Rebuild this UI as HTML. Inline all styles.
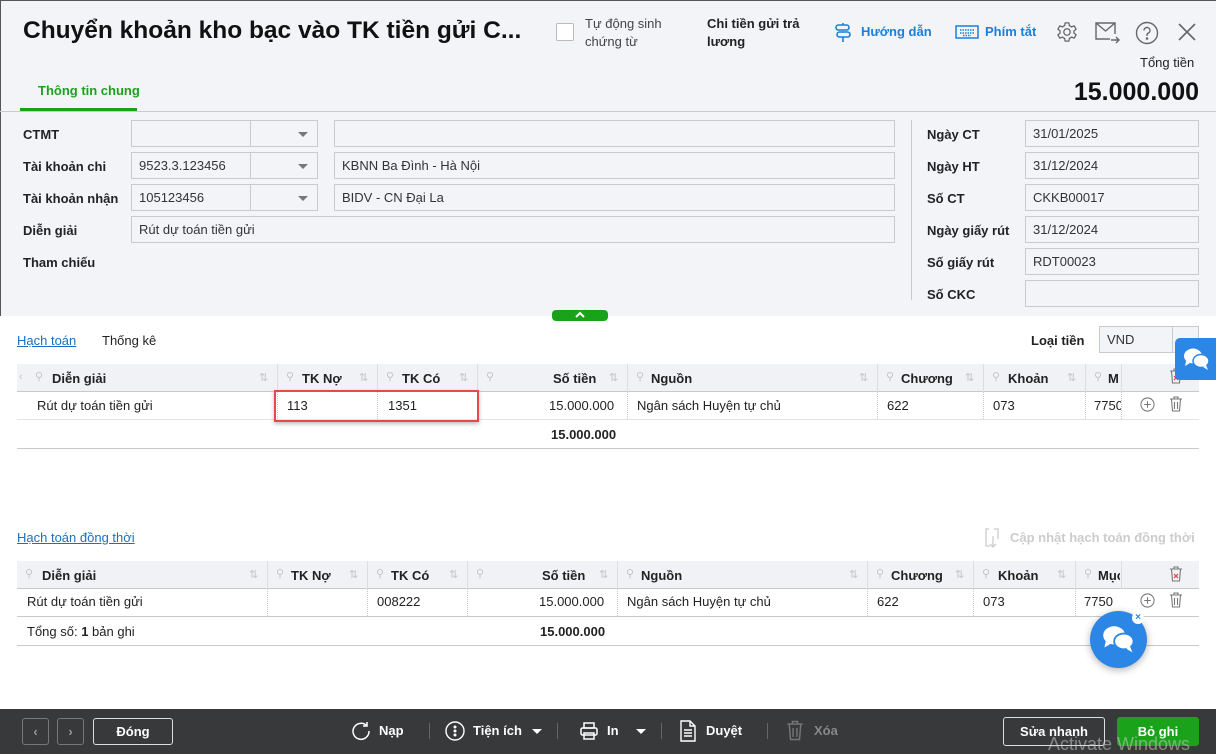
<!DOCTYPE html>
<html><head><meta charset="utf-8"><style>
*{box-sizing:border-box;margin:0;padding:0}
body{width:1216px;height:754px;overflow:hidden;position:relative;font-family:"Liberation Sans",sans-serif;font-size:13px;color:#222;background:#fff}
.a{position:absolute;white-space:nowrap}
.b{font-weight:bold}
.inp{position:absolute;height:27px;border:1px solid #c9cacd;background:#f3f4f8;padding:0 7px;line-height:25px;font-size:13px;color:#333}
.dd{position:absolute;width:1px;background:#c9cacd}
.tri{position:absolute;width:0;height:0;border-left:5px solid transparent;border-right:5px solid transparent;border-top:5px solid #777}
.th{position:absolute;background:#f1f2f5;border-bottom:1px solid #c5c6ca}
.cell{position:absolute;font-size:13px}
.vs{position:absolute;width:1px;background:#dcdde0}
.vd{position:absolute;width:0;border-left:1px dotted #c9c9c9}
.hl{position:absolute;height:1px;background:#c8c9cc}
.fb{position:absolute;border:1px solid #ddd;border-radius:3px;color:#fff;font-weight:bold;text-align:center;line-height:25px;font-size:13px}
.ft{position:absolute;color:#fff;font-weight:bold;font-size:13px}
.sep{position:absolute;width:1px;height:16px;background:#666;top:723px}
.pin{position:absolute;font-size:11px;color:#c4c4c4}
.so{position:absolute;font-size:11px;color:#c4c4c4}
</style></head><body>
<div class="a" style="left:0;top:0;width:1216px;height:316px;background:#f3f4f8;border-left:1px solid #555;border-top:1px solid #555"></div>
<div class="a b" style="left:23px;top:17px;font-size:24.5px;color:#111">Chuyển khoản kho bạc vào TK tiền gửi C...</div>
<div class="a" style="left:556px;top:23px;width:18px;height:18px;border:1px solid #bbb;background:#fff;border-radius:2px"></div>
<div class="a" style="left:585px;top:15px;line-height:18px;color:#444">Tự động sinh<br>chứng từ</div>
<div class="a b" style="left:707px;top:15px;line-height:18px;color:#222">Chi tiền gửi trả<br>lương</div>
<svg class="a" style="left:834px;top:23px" width="18" height="20" viewBox="0 0 18 20" fill="none" stroke="#1a7fdb" stroke-width="1.6"><rect x="2" y="2" width="13" height="5" rx="2.5"/><rect x="3" y="9" width="13" height="5" rx="2.5"/><path d="M9 14v5M9 0v2"/></svg>
<div class="a b" style="left:861px;top:24px;color:#1a7fdb">Hướng dẫn</div>
<svg class="a" style="left:955px;top:25px" width="24" height="14" viewBox="0 0 24 14" fill="none" stroke="#1a7fdb" stroke-width="1.5"><rect x="1" y="1" width="22" height="12"/><path d="M5 5h14M5 8h14M8 10.5h8" stroke-dasharray="1.5 1"/></svg>
<div class="a b" style="left:985px;top:24px;color:#1a7fdb">Phím tắt</div>
<svg class="a" style="left:1056px;top:21px" width="22" height="22" viewBox="0 0 24 24" fill="none" stroke="#666" stroke-width="1.4"><circle cx="12" cy="12" r="3.5"/><path d="M10 2h4l.6 3 2.4 1.4 2.9-1 2 3.4-2.3 2v2.4l2.3 2-2 3.4-2.9-1-2.4 1.4-.6 3h-4l-.6-3-2.4-1.4-2.9 1-2-3.4 2.3-2V10.8l-2.3-2 2-3.4 2.9 1L9.4 5z"/></svg>
<svg class="a" style="left:1095px;top:22px" width="26" height="22" viewBox="0 0 26 22" fill="none" stroke="#666" stroke-width="1.4"><path d="M20 12V1H1v16h14M1 1l9.5 8L20 1M16 18h8M21 15l3 3-3 3"/></svg>
<svg class="a" style="left:1135px;top:21px" width="24" height="24" viewBox="0 0 24 24" fill="none" stroke="#666" stroke-width="1.4"><circle cx="12" cy="12" r="10.5"/><path d="M9 9.5a3 3 0 1 1 4 2.8c-.8.4-1 1-1 2v.7"/><circle cx="12" cy="17.5" r=".6" fill="#666"/></svg>
<svg class="a" style="left:1177px;top:22px" width="20" height="20" viewBox="0 0 20 20" stroke="#666" stroke-width="1.6"><path d="M2 2l16 16M18 2L2 18"/></svg>
<div class="a" style="left:1140px;top:55px;color:#222">Tổng tiền</div>
<div class="a b" style="right:17px;top:78px;font-size:25px;color:#111">15.000.000</div>
<div class="a b" style="left:38px;top:83px;color:#1aa31a">Thông tin chung</div>
<div class="a" style="left:20px;top:108px;width:117px;height:3px;background:#1aa31a"></div>
<div class="a" style="left:0;top:111px;width:1216px;height:1px;background:#c9cacd"></div>

<div class="a b" style="left:23px;top:127px">CTMT</div>
<div class="a b" style="left:23px;top:159px">Tài khoản chi</div>
<div class="a b" style="left:23px;top:191px">Tài khoản nhận</div>
<div class="a b" style="left:23px;top:223px">Diễn giải</div>
<div class="a b" style="left:23px;top:255px">Tham chiếu</div>
<div class="inp" style="left:131px;top:120px;width:187px"></div>
<div class="inp" style="left:131px;top:152px;width:187px">9523.3.123456</div>
<div class="inp" style="left:131px;top:184px;width:187px">105123456</div>
<div class="dd" style="left:250px;top:121px;height:25px"></div>
<div class="dd" style="left:250px;top:153px;height:25px"></div>
<div class="dd" style="left:250px;top:185px;height:25px"></div>
<div class="tri" style="left:298px;top:132px"></div>
<div class="tri" style="left:298px;top:164px"></div>
<div class="tri" style="left:298px;top:196px"></div>
<div class="inp" style="left:334px;top:120px;width:561px"></div>
<div class="inp" style="left:334px;top:152px;width:561px">KBNN Ba Đình - Hà Nội</div>
<div class="inp" style="left:334px;top:184px;width:561px">BIDV - CN Đại La</div>
<div class="inp" style="left:131px;top:216px;width:764px">Rút dự toán tiền gửi</div>
<div class="a" style="left:911px;top:120px;width:1px;height:180px;background:#c9cacd"></div>
<div class="a b" style="left:927px;top:127px">Ngày CT</div>
<div class="a b" style="left:927px;top:159px">Ngày HT</div>
<div class="a b" style="left:927px;top:191px">Số CT</div>
<div class="a b" style="left:927px;top:223px">Ngày giấy rút</div>
<div class="a b" style="left:927px;top:255px">Số giấy rút</div>
<div class="a b" style="left:927px;top:287px">Số CKC</div>
<div class="inp" style="left:1025px;top:120px;width:174px">31/01/2025</div>
<div class="inp" style="left:1025px;top:152px;width:174px">31/12/2024</div>
<div class="inp" style="left:1025px;top:184px;width:174px">CKKB00017</div>
<div class="inp" style="left:1025px;top:216px;width:174px">31/12/2024</div>
<div class="inp" style="left:1025px;top:248px;width:174px">RDT00023</div>
<div class="inp" style="left:1025px;top:280px;width:174px"></div>
<div class="a" style="left:552px;top:310px;width:56px;height:11px;background:#1aa31a;border-radius:4px"></div>
<svg class="a" style="left:574px;top:311px" width="12" height="8" viewBox="0 0 12 8" fill="none" stroke="#fff" stroke-width="2"><path d="M2 6l4-4 4 4"/></svg>

<div class="a" style="left:17px;top:333px;color:#1a6fc4;text-decoration:underline">Hạch toán</div>
<div class="a" style="left:102px;top:333px;color:#222">Thống kê</div>
<div class="a b" style="left:1031px;top:333px">Loại tiền</div>
<div class="inp" style="left:1099px;top:326px;width:100px;background:#f3f4f8">VND</div>
<div class="dd" style="left:1172px;top:327px;height:25px"></div>

<!-- table 1 -->
<div class="th" style="left:17px;top:364px;width:1182px;height:28px"></div>
<div class="hl" style="left:17px;top:391px;width:1182px"></div>
<div class="hl" style="left:17px;top:419px;width:1182px;background:#e2e3e6"></div>
<div class="hl" style="left:17px;top:448px;width:1182px"></div>
<div class="vs" style="left:277px;top:364px;height:28px"></div><div class="vs" style="left:377px;top:364px;height:28px"></div><div class="vs" style="left:477px;top:364px;height:28px"></div><div class="vs" style="left:627px;top:364px;height:28px"></div><div class="vs" style="left:877px;top:364px;height:28px"></div><div class="vs" style="left:983px;top:364px;height:28px"></div><div class="vs" style="left:1085px;top:364px;height:28px"></div><div class="vs" style="left:1121px;top:364px;height:28px"></div>
<div class="vd" style="left:277px;top:392px;height:27px"></div><div class="vd" style="left:377px;top:392px;height:27px"></div><div class="vd" style="left:477px;top:392px;height:27px"></div><div class="vd" style="left:627px;top:392px;height:27px"></div><div class="vd" style="left:877px;top:392px;height:27px"></div><div class="vd" style="left:983px;top:392px;height:27px"></div><div class="vd" style="left:1085px;top:392px;height:27px"></div><div class="vd" style="left:1121px;top:392px;height:27px"></div>
<div class="pin" style="left:19px;top:371px">‹</div>
<div class="pin" style="left:35px;top:370px">⚲</div><div class="pin" style="left:286px;top:370px">⚲</div><div class="pin" style="left:386px;top:370px">⚲</div><div class="pin" style="left:486px;top:370px">⚲</div><div class="pin" style="left:636px;top:370px">⚲</div><div class="pin" style="left:886px;top:370px">⚲</div><div class="pin" style="left:992px;top:370px">⚲</div><div class="pin" style="left:1094px;top:370px">⚲</div>
<div class="so" style="left:259px;top:371px">⇅</div><div class="so" style="left:359px;top:371px">⇅</div><div class="so" style="left:459px;top:371px">⇅</div><div class="so" style="left:609px;top:371px">⇅</div><div class="so" style="left:859px;top:371px">⇅</div><div class="so" style="left:965px;top:371px">⇅</div><div class="so" style="left:1067px;top:371px">⇅</div>
<div class="cell b" style="left:52px;top:371px">Diễn giải</div>
<div class="cell b" style="left:302px;top:371px">TK Nợ</div>
<div class="cell b" style="left:402px;top:371px">TK Có</div>
<div class="cell b" style="left:553px;top:371px">Số tiền</div>
<div class="cell b" style="left:651px;top:371px">Nguồn</div>
<div class="cell b" style="left:901px;top:371px">Chương</div>
<div class="cell b" style="left:1008px;top:371px">Khoản</div>
<div class="cell b" style="left:1108px;top:371px">M</div>
<div class="cell" style="left:37px;top:398px">Rút dự toán tiền gửi</div>
<div class="cell" style="left:287px;top:398px">113</div>
<div class="cell" style="left:388px;top:398px">1351</div>
<div class="cell" style="left:549px;top:398px">15.000.000</div>
<div class="cell" style="left:637px;top:398px">Ngân sách Huyện tự chủ</div>
<div class="cell" style="left:887px;top:398px">622</div>
<div class="cell" style="left:993px;top:398px">073</div>
<div class="cell" style="left:1094px;top:398px;width:27px;overflow:hidden">7750</div>
<div class="cell b" style="left:551px;top:427px">15.000.000</div>
<div class="a" style="left:274px;top:390px;width:205px;height:32px;border:2px solid #e8484a;box-shadow:0 2px 4px rgba(0,0,0,.25)"></div>

<!-- table 2 -->
<div class="a" style="left:17px;top:530px;color:#1a6fc4;text-decoration:underline">Hạch toán đồng thời</div>
<div class="a b" style="left:1010px;top:530px;color:#ccc">Cập nhật hạch toán đồng thời</div>
<svg class="a" style="left:984px;top:528px" width="16" height="20" viewBox="0 0 16 20" fill="none" stroke="#ccc" stroke-width="1.3"><path d="M5 1H2v17h4M9 8v11M6 16l3 3 3-3M10 1h4v10"/></svg>
<div class="th" style="left:17px;top:561px;width:1182px;height:28px"></div>
<div class="hl" style="left:17px;top:588px;width:1182px"></div>
<div class="hl" style="left:17px;top:616px;width:1182px;background:#c8c9cc"></div>
<div class="hl" style="left:17px;top:645px;width:1182px"></div>
<div class="vs" style="left:267px;top:561px;height:28px"></div><div class="vs" style="left:367px;top:561px;height:28px"></div><div class="vs" style="left:467px;top:561px;height:28px"></div><div class="vs" style="left:617px;top:561px;height:28px"></div><div class="vs" style="left:867px;top:561px;height:28px"></div><div class="vs" style="left:973px;top:561px;height:28px"></div><div class="vs" style="left:1075px;top:561px;height:28px"></div><div class="vs" style="left:1121px;top:561px;height:28px"></div>
<div class="vd" style="left:267px;top:589px;height:27px"></div><div class="vd" style="left:367px;top:589px;height:27px"></div><div class="vd" style="left:467px;top:589px;height:27px"></div><div class="vd" style="left:617px;top:589px;height:27px"></div><div class="vd" style="left:867px;top:589px;height:27px"></div><div class="vd" style="left:973px;top:589px;height:27px"></div><div class="vd" style="left:1075px;top:589px;height:27px"></div>
<div class="pin" style="left:25px;top:567px">⚲</div><div class="pin" style="left:276px;top:567px">⚲</div><div class="pin" style="left:376px;top:567px">⚲</div><div class="pin" style="left:476px;top:567px">⚲</div><div class="pin" style="left:626px;top:567px">⚲</div><div class="pin" style="left:876px;top:567px">⚲</div><div class="pin" style="left:982px;top:567px">⚲</div><div class="pin" style="left:1084px;top:567px">⚲</div>
<div class="so" style="left:249px;top:568px">⇅</div><div class="so" style="left:349px;top:568px">⇅</div><div class="so" style="left:449px;top:568px">⇅</div><div class="so" style="left:599px;top:568px">⇅</div><div class="so" style="left:849px;top:568px">⇅</div><div class="so" style="left:955px;top:568px">⇅</div><div class="so" style="left:1057px;top:568px">⇅</div>
<div class="cell b" style="left:42px;top:568px">Diễn giải</div>
<div class="cell b" style="left:291px;top:568px">TK Nợ</div>
<div class="cell b" style="left:391px;top:568px">TK Có</div>
<div class="cell b" style="left:542px;top:568px">Số tiền</div>
<div class="cell b" style="left:641px;top:568px">Nguồn</div>
<div class="cell b" style="left:891px;top:568px">Chương</div>
<div class="cell b" style="left:998px;top:568px">Khoản</div>
<div class="cell b" style="left:1098px;top:568px;width:22px;overflow:hidden">Mục</div>
<div class="cell" style="left:27px;top:594px">Rút dự toán tiền gửi</div>
<div class="cell" style="left:377px;top:594px">008222</div>
<div class="cell" style="left:539px;top:594px">15.000.000</div>
<div class="cell" style="left:627px;top:594px">Ngân sách Huyện tự chủ</div>
<div class="cell" style="left:877px;top:594px">622</div>
<div class="cell" style="left:983px;top:594px">073</div>
<div class="cell" style="left:1084px;top:594px">7750</div>
<div class="cell" style="left:27px;top:624px">Tổng số: <b>1</b> bản ghi</div>
<div class="cell b" style="left:540px;top:624px">15.000.000</div>

<!-- row icons -->
<svg class="a" style="left:1140px;top:397px" width="15" height="15" viewBox="0 0 16 16" fill="none" stroke="#777" stroke-width="1.1"><circle cx="8" cy="8" r="7"/><path d="M8 4.5v7M4.5 8h7"/></svg>
<svg class="a" style="left:1140px;top:593px" width="15" height="15" viewBox="0 0 16 16" fill="none" stroke="#777" stroke-width="1.1"><circle cx="8" cy="8" r="7"/><path d="M8 4.5v7M4.5 8h7"/></svg>
<svg class="a" style="left:1169px;top:396px" width="14" height="16" viewBox="0 0 14 16" fill="none" stroke="#777" stroke-width="1.1"><path d="M1 3h12M5 3V1h4v2M2.5 3l1 12h7l1-12M5.5 6v7M8.5 6v7"/></svg>
<svg class="a" style="left:1169px;top:592px" width="14" height="16" viewBox="0 0 14 16" fill="none" stroke="#777" stroke-width="1.1"><path d="M1 3h12M5 3V1h4v2M2.5 3l1 12h7l1-12M5.5 6v7M8.5 6v7"/></svg>
<svg class="a" style="left:1169px;top:368px" width="14" height="16" viewBox="0 0 14 16" fill="none" stroke="#777" stroke-width="1.1"><path d="M1 3h12M5 3V1h4v2M2.5 3l1 12h7l1-12"/><path d="M5 8l4 4M9 8l-4 4" stroke="#e33"/></svg>
<svg class="a" style="left:1169px;top:566px" width="14" height="16" viewBox="0 0 14 16" fill="none" stroke="#777" stroke-width="1.1"><path d="M1 3h12M5 3V1h4v2M2.5 3l1 12h7l1-12"/><path d="M5 8l4 4M9 8l-4 4" stroke="#e33"/></svg>

<!-- chat widgets -->
<div class="a" style="left:1175px;top:338px;width:41px;height:42px;background:#2b86e6;border-radius:5px 0 0 5px"></div>
<svg class="a" style="left:1183px;top:347px" width="28" height="24" viewBox="0 0 28 24" fill="#fff"><ellipse cx="10" cy="9" rx="9" ry="7.5"/><path d="M3 14l-1 5 5-3z"/><ellipse cx="18" cy="14" rx="8" ry="6.5" stroke="#2b86e6" stroke-width="1.5"/><path d="M23 18l2 5-5-3z"/></svg>
<div class="a" style="left:1090px;top:611px;width:57px;height:57px;background:#2b86e6;border-radius:50%;box-shadow:0 2px 8px rgba(0,0,0,.3)"></div>
<svg class="a" style="left:1102px;top:624px" width="34" height="30" viewBox="0 0 28 24" fill="#fff"><ellipse cx="10" cy="9" rx="9" ry="7.5"/><path d="M3 14l-1 5 5-3z"/><ellipse cx="18" cy="14" rx="8" ry="6.5" stroke="#2b86e6" stroke-width="1.5"/><path d="M23 18l2 5-5-3z"/></svg>
<div class="a" style="left:1132px;top:612px;width:12px;height:12px;background:#fff;border-radius:50%;color:#2b86e6;font-size:10px;line-height:11px;text-align:center;font-weight:bold">×</div>

<!-- footer -->
<div class="a" style="left:0;top:709px;width:1216px;height:45px;background:#38393b"></div>
<div class="fb" style="left:22px;top:718px;width:27px;height:27px;border-color:#777;color:#999">‹</div>
<div class="fb" style="left:57px;top:718px;width:27px;height:27px;border-color:#777;color:#999">›</div>
<div class="fb" style="left:93px;top:718px;width:80px;height:27px">Đóng</div>
<svg class="a" style="left:351px;top:721px" width="20" height="20" viewBox="0 0 20 20" fill="none" stroke="#fff" stroke-width="1.5"><path d="M16 5A8 8 0 1 0 18 10M16 1v4h-4"/></svg>
<div class="ft" style="left:379px;top:723px">Nạp</div>
<div class="sep" style="left:429px"></div>
<svg class="a" style="left:445px;top:721px" width="20" height="20" viewBox="0 0 20 20" fill="none" stroke="#fff" stroke-width="1.4"><circle cx="10" cy="10" r="9"/><circle cx="10" cy="6" r=".8" fill="#fff"/><circle cx="10" cy="10" r=".8" fill="#fff"/><circle cx="10" cy="14" r=".8" fill="#fff"/></svg>
<div class="ft" style="left:473px;top:723px">Tiện ích</div>
<div class="tri" style="left:532px;top:729px;border-top-color:#fff"></div>
<div class="sep" style="left:557px"></div>
<svg class="a" style="left:579px;top:721px" width="20" height="20" viewBox="0 0 20 20" fill="none" stroke="#fff" stroke-width="1.5"><rect x="5" y="2" width="10" height="5"/><rect x="2" y="7" width="16" height="7" rx="1.5"/><rect x="5" y="12" width="10" height="6"/></svg>
<div class="ft" style="left:607px;top:723px">In</div>
<div class="tri" style="left:636px;top:729px;border-top-color:#fff"></div>
<div class="sep" style="left:661px"></div>
<svg class="a" style="left:679px;top:720px" width="18" height="22" viewBox="0 0 18 22" fill="none" stroke="#fff" stroke-width="1.4"><path d="M2 1h9l5 5v15H2zM11 1v5h5M5 10h8M5 13h8M5 16h8"/></svg>
<div class="ft" style="left:706px;top:723px">Duyệt</div>
<div class="sep" style="left:767px"></div>
<svg class="a" style="left:786px;top:720px" width="18" height="21" viewBox="0 0 14 16" fill="none" stroke="#777" stroke-width="1.1"><path d="M1 3h12M5 3V1h4v2M2.5 3l1 12h7l1-12M5.5 6v7M8.5 6v7"/></svg>
<div class="ft" style="left:814px;top:723px;color:#888">Xóa</div>
<div class="fb" style="left:1003px;top:717px;width:102px;height:29px;line-height:27px">Sửa nhanh</div>
<div class="fb" style="left:1117px;top:717px;width:82px;height:29px;line-height:27px;background:#1aa31a;border-color:#1aa31a">Bỏ ghi</div>
<div class="a" style="left:1048px;top:734px;font-size:18px;color:rgba(200,200,200,.55)">Activate Windows</div>
</body></html>
